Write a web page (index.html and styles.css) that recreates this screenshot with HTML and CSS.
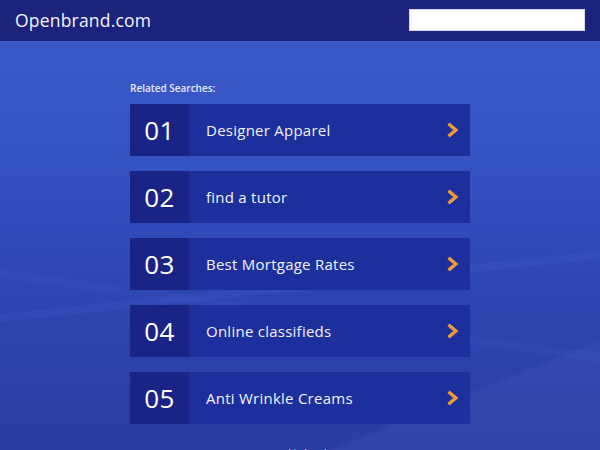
FILE: index.html
```html
<!DOCTYPE html>
<html>
<head>
<meta charset="utf-8">
<link rel="stylesheet" href="styles.css">
</head>
<body>
<header class="topbar">
  <div class="brand">Openbrand.com</div>
  <input class="search" type="text">
</header>
<main class="page">
  <section class="related">
    <div class="label">Related Searches:</div>
    <a class="row" href="#"><span class="num">01</span><span class="term">Designer Apparel</span><svg class="arrow" viewBox="0 0 13 16"><path d="M2.5 1.8 L9.8 8 L2.5 14.2"/></svg></a>
    <a class="row" href="#"><span class="num">02</span><span class="term">find a tutor</span><svg class="arrow" viewBox="0 0 13 16"><path d="M2.5 1.8 L9.8 8 L2.5 14.2"/></svg></a>
    <a class="row" href="#"><span class="num">03</span><span class="term">Best Mortgage Rates</span><svg class="arrow" viewBox="0 0 13 16"><path d="M2.5 1.8 L9.8 8 L2.5 14.2"/></svg></a>
    <a class="row" href="#"><span class="num">04</span><span class="term">Online classifieds</span><svg class="arrow" viewBox="0 0 13 16"><path d="M2.5 1.8 L9.8 8 L2.5 14.2"/></svg></a>
    <a class="row" href="#"><span class="num">05</span><span class="term">Anti Wrinkle Creams</span><svg class="arrow" viewBox="0 0 13 16"><path d="M2.5 1.8 L9.8 8 L2.5 14.2"/></svg></a>
  </section>
  <div class="buy">Buy this domain</div>
</main>
</body>
</html>
```
FILE: styles.css
```css
html, body {
  margin: 0;
  padding: 0;
}
body {
  width: 600px;
  height: 450px;
  overflow: hidden;
  font-family: "Open Sans", "Liberation Sans", sans-serif;
  color: #fff;
  background:
    linear-gradient(174deg, transparent 0 61%, rgba(120,150,255,0.07) 61.5% 62.5%, transparent 63% 100%),
    linear-gradient(188deg, transparent 0 66%, rgba(110,140,240,0.06) 66.5% 67.5%, transparent 68% 100%),
    linear-gradient(158deg, transparent 0 84%, rgba(90,110,210,0.14) 84.5% 100%),
    linear-gradient(180deg, #3d5bc9 0%, #3552c3 35%, #2d45b1 65%, #2a3ca2 100%);
}
.topbar {
  height: 41px;
  background: #1b237c;
  display: flex;
  align-items: center;
  justify-content: space-between;
  padding: 0 15px;
  box-sizing: border-box;
}
.brand {
  font-size: 17.5px;
  letter-spacing: 0.2px;
  color: #f2f4ff;
  margin-top: -1px;
}
.search {
  width: 176px;
  height: 22px;
  box-sizing: border-box;
  border: 1px solid #d8dcef;
  background: #fff;
  margin: -1px 0 0 0;
  padding: 0;
}
.page {
  display: flex;
  flex-direction: column;
  align-items: center;
}
.related {
  width: 340px;
  padding-top: 41px;
}
.label {
  font-size: 10px;
  font-weight: 600;
  color: #e6eaff;
  line-height: 13px;
  margin-bottom: 9px;
}
.row {
  display: flex;
  align-items: center;
  height: 52px;
  margin-bottom: 15px;
  background: #1d2e9d;
  text-decoration: none;
  color: #fff;
}
.num {
  width: 59px;
  height: 100%;
  background: #1a2386;
  display: flex;
  align-items: center;
  justify-content: center;
  font-size: 26px;
  font-weight: 400;
  letter-spacing: 0.5px;
  color: #fff;
}
.term {
  flex: 1;
  padding-left: 17px;
  font-size: 15px;
  color: #f2f4ff;
  letter-spacing: 0.25px;
}
.arrow {
  width: 13px;
  height: 16px;
  margin-right: 11px;
  fill: none;
  stroke: #f39a34;
  stroke-width: 3.4;
  stroke-linecap: butt;
  stroke-linejoin: miter;
}
.buy {
  margin-top: 8px;
  font-size: 8px;
  color: #dfe4ff;
  font-weight: 600;
}
```
